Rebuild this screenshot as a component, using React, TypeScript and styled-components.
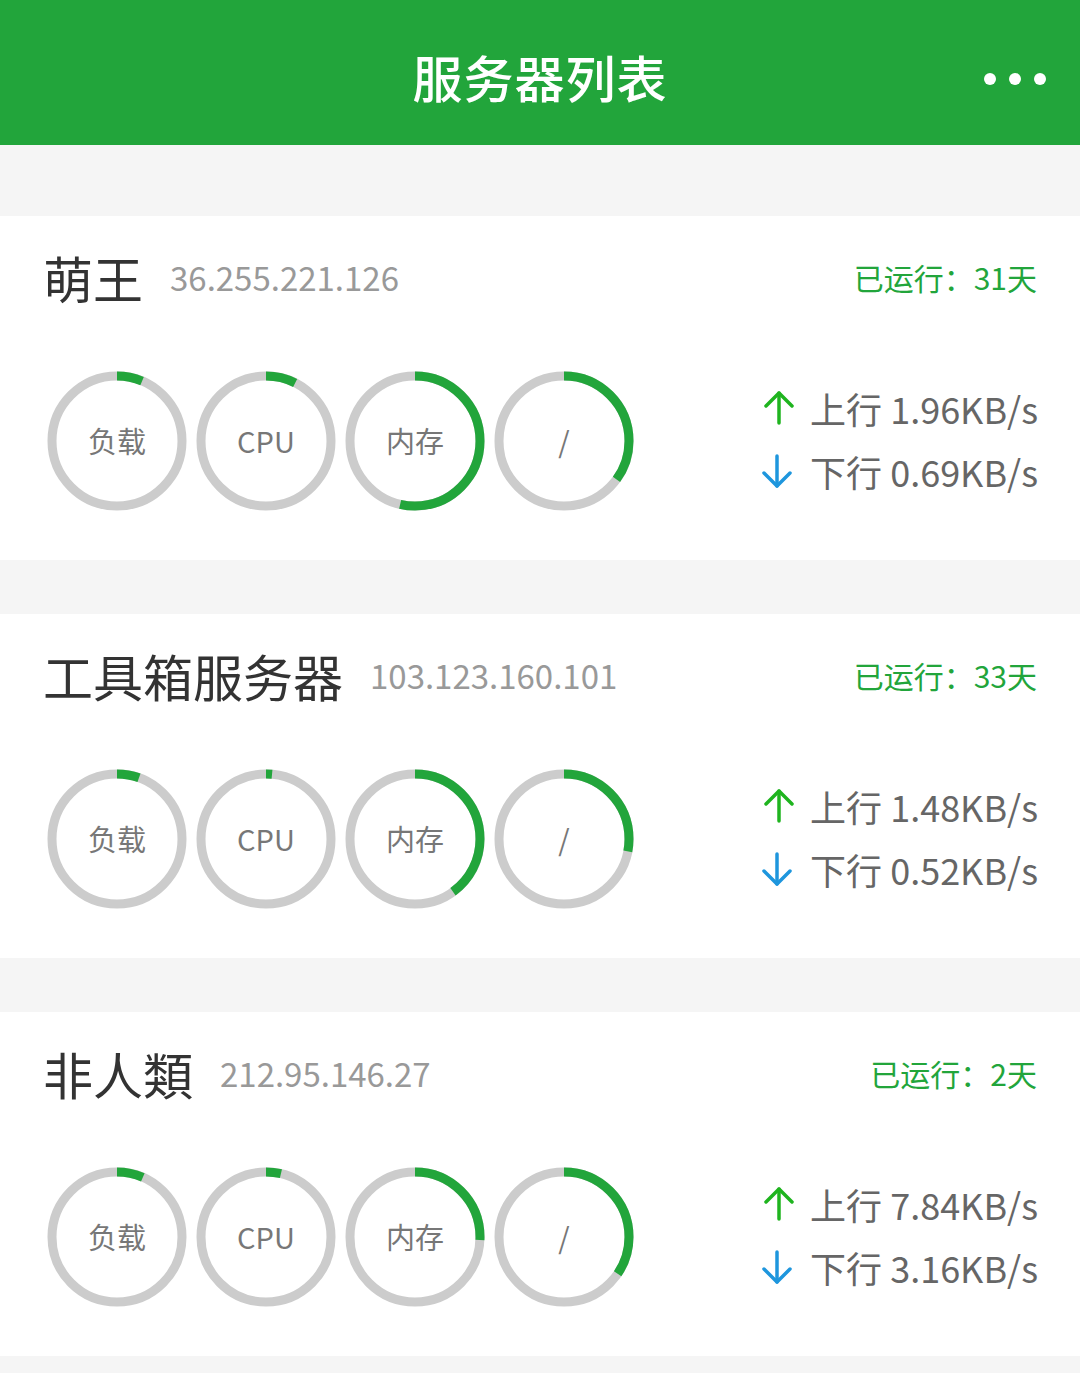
import React from "react";
import styled, { createGlobalStyle } from "styled-components";

const GlobalStyle = createGlobalStyle`
  html, body {
    margin: 0;
    padding: 0;
    background: #f5f5f5;
  }
  body {
    font-family: "Noto Sans CJK SC", "Noto Sans", sans-serif;
  }
`;

const GREEN = "#22a53b";

const Page = styled.div`
  min-height: 100vh;
  background: #f5f5f5;
`;

const Header = styled.header`
  height: 145px;
  background: ${GREEN};
  display: flex;
  align-items: center;
  justify-content: center;
  position: relative;
`;

const HeaderTitle = styled.h1`
  margin: 0;
  font-size: 50px;
  font-weight: 500;
  color: #fff;
  line-height: 1;
  letter-spacing: 1px;
  padding-top: 6px;
`;

const MoreButton = styled.div`
  position: absolute;
  right: 34px;
  top: 73px;
  display: flex;
  gap: 13px;
`;

const Dot = styled.span`
  width: 12px;
  height: 12px;
  border-radius: 50%;
  background: #fff;
`;

const List = styled.main`
  padding-top: 71px;
  display: flex;
  flex-direction: column;
  gap: 54px;
`;

const Card = styled.section`
  background: #fff;
  height: 344px;
  box-sizing: border-box;
  padding: 26px 43px 0 43px;
`;

const TitleRow = styled.div`
  height: 70px;
  display: flex;
  align-items: center;
`;

const Name = styled.span`
  font-size: 50px;
  color: #333;
  line-height: 70px;
`;

const Ip = styled.span`
  font-size: 33px;
  color: #999;
  margin-left: 27px;
  line-height: 70px;
`;

const Uptime = styled.span`
  margin-left: auto;
  font-size: 30px;
  color: ${GREEN};
  line-height: 70px;
`;

const StatsRow = styled.div`
  margin-top: 59px;
  display: flex;
  align-items: center;
`;

const Gauges = styled.div`
  display: flex;
  gap: 9px;
  margin-left: 4px;
`;

const GaugeBox = styled.div`
  width: 140px;
  height: 140px;
  position: relative;
  display: flex;
  align-items: center;
  justify-content: center;
`;

const GaugeSvg = styled.svg`
  position: absolute;
  inset: 0;
`;

const GaugeLabel = styled.span`
  font-size: 29px;
  color: #777;
  position: relative;
  padding-bottom: 3px;
`;

const Traffic = styled.div`
  margin-left: auto;
  margin-right: -1px;
  display: flex;
  flex-direction: column;
  padding-bottom: 4px;
`;

const TrafficLine = styled.div`
  height: 63px;
  display: flex;
  align-items: center;
  justify-content: flex-end;
  gap: 16px;
  font-size: 36px;
  color: #666;
`;

const ArrowIcon = styled.svg`
  flex-shrink: 0;
`;

const Gauge: React.FC<{ label: string; percent: number }> = ({ label, percent }) => {
  const r = 65;
  const circ = 2 * Math.PI * r;
  const len = (percent / 100) * circ;
  return (
    <GaugeBox>
      <GaugeSvg width="140" height="140" viewBox="0 0 140 140">
        <circle cx="70" cy="70" r={r} fill="none" stroke="#cccccc" strokeWidth="9" />
        <circle
          cx="70"
          cy="70"
          r={r}
          fill="none"
          stroke={GREEN}
          strokeWidth="9"
          strokeDasharray={`${len} ${circ}`}
          transform="rotate(-90 70 70)"
        />
      </GaugeSvg>
      <GaugeLabel>{label}</GaugeLabel>
    </GaugeBox>
  );
};

const Arrow: React.FC<{ dir: "up" | "down" }> = ({ dir }) => (
  <ArrowIcon width="32" height="36" viewBox="0 0 32 36">
    <g
      fill="none"
      stroke={dir === "up" ? "#1fb41f" : "#1e96dd"}
      strokeWidth="3.5"
      strokeLinecap="round"
      strokeLinejoin="round"
      transform={dir === "down" ? "rotate(180 16 18)" : undefined}
    >
      <path d="M17 3 V33" />
      <path d="M4 16 L17 3 L30 16" />
    </g>
  </ArrowIcon>
);

type Server = {
  name: string;
  ip: string;
  uptime: string;
  load: number;
  cpu: number;
  mem: number;
  disk: number;
  up: string;
  down: string;
};

const servers: Server[] = [
  { name: "萌王", ip: "36.255.221.126", uptime: "31天", load: 6.3, cpu: 7.4, mem: 53.6, disk: 35, up: "1.96KB/s", down: "0.69KB/s" },
  { name: "工具箱服务器", ip: "103.123.160.101", uptime: "33天", load: 5.5, cpu: 1.5, mem: 40, disk: 28, up: "1.48KB/s", down: "0.52KB/s" },
  { name: "非人類", ip: "212.95.146.27", uptime: "2天", load: 6.5, cpu: 3.7, mem: 25.7, disk: 34.5, up: "7.84KB/s", down: "3.16KB/s" },
];

export default function App() {
  return (
    <Page>
      <GlobalStyle />
      <Header>
        <HeaderTitle>服务器列表</HeaderTitle>
        <MoreButton>
          <Dot />
          <Dot />
          <Dot />
        </MoreButton>
      </Header>
      <List>
        {servers.map((s) => (
          <Card key={s.ip}>
            <TitleRow>
              <Name>{s.name}</Name>
              <Ip>{s.ip}</Ip>
              <Uptime>已运行：{s.uptime}</Uptime>
            </TitleRow>
            <StatsRow>
              <Gauges>
                <Gauge label="负载" percent={s.load} />
                <Gauge label="CPU" percent={s.cpu} />
                <Gauge label="内存" percent={s.mem} />
                <Gauge label="/" percent={s.disk} />
              </Gauges>
              <Traffic>
                <TrafficLine>
                  <Arrow dir="up" />
                  <span>上行 {s.up}</span>
                </TrafficLine>
                <TrafficLine>
                  <Arrow dir="down" />
                  <span>下行 {s.down}</span>
                </TrafficLine>
              </Traffic>
            </StatsRow>
          </Card>
        ))}
      </List>
    </Page>
  );
}
